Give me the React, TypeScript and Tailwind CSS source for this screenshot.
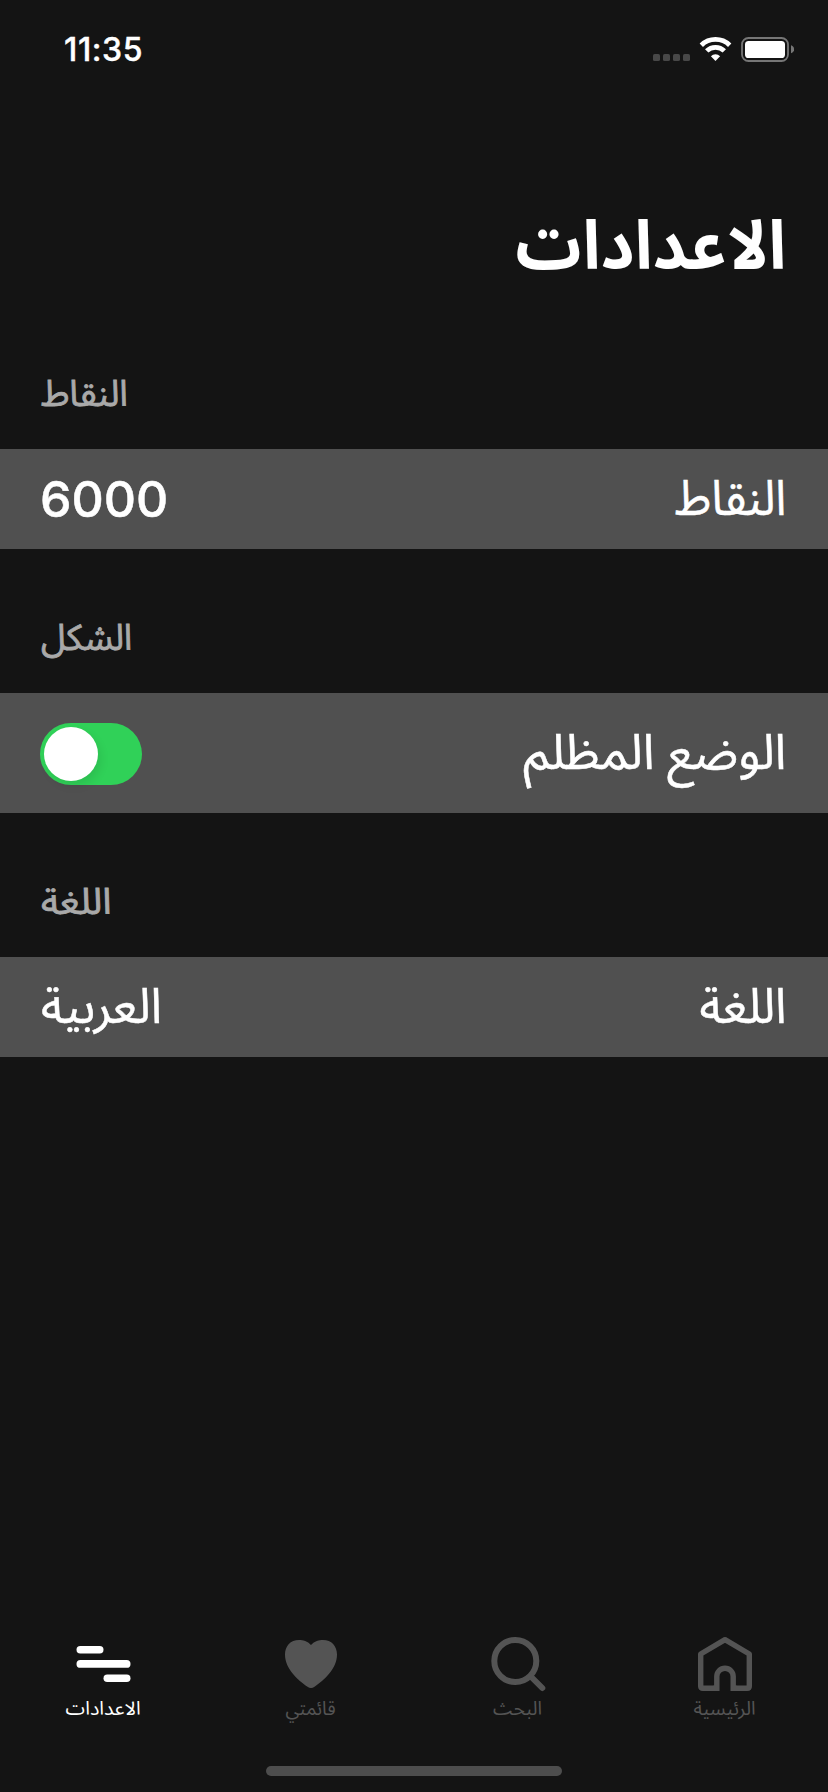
import type { ReactNode } from "react";

const ARABIC = "font-['Noto_Sans_Arabic','DejaVu_Sans',sans-serif] whitespace-nowrap inline-block";
const LATIN = "font-['Inter',sans-serif] whitespace-nowrap inline-block";
const ROW_TEXT = `${ARABIC} mt-px text-[49px] leading-[60px] [-webkit-text-stroke:0.5px]`;

function StatusBar() {
  return (
    <header dir="ltr" className="flex h-[98px] items-start justify-between pr-[34px] pl-[64px]">
      <span className={`${LATIN} mt-[29px] text-[32px] leading-[42px] font-medium tracking-[0.6px] [-webkit-text-stroke:0.4px]`}>11:35</span>
      <svg className="mt-[36px]" width="141" height="26" viewBox="0 0 141 26">
        <g fill="#484848">
          <rect x="0" y="18" width="7" height="7" rx="1.6" />
          <rect x="10" y="18" width="7" height="7" rx="1.6" />
          <rect x="20" y="18" width="7" height="7" rx="1.6" />
          <rect x="30" y="18" width="7" height="7" rx="1.6" />
        </g>
        <g fill="none" stroke="#fff" strokeWidth="4.8">
          <path d="M48.3 9.2a20.4 20.4 0 0 1 28.4 0" />
          <path d="M53.7 14.9a12.6 12.6 0 0 1 17.6 0" />
        </g>
        <path d="M62.5 25l-4.6-4.8a6.6 6.6 0 0 1 9.2 0z" fill="#fff" />
        <rect x="89" y="2" width="46" height="23" rx="6.5" fill="none" stroke="#767676" strokeWidth="1.8" />
        <rect x="92" y="5" width="40" height="17" rx="3.6" fill="#fff" />
        <path d="M138 9.2c4.2 1.4 4.2 6.6 0 8z" fill="#767676" />
      </svg>
    </header>
  );
}

function Section({ title, titleClass, rowClass, children }: { title: string; titleClass: string; rowClass: string; children: ReactNode }) {
  return (
    <section>
      <div className="flex h-[144px] justify-end pt-[68px] pl-[41px]">
        <h2 className={`${ARABIC} origin-left text-[36px] leading-[44px] text-[#a9a9a9] [-webkit-text-stroke:0.8px] ${titleClass}`}>{title}</h2>
      </div>
      <div className={`flex items-center justify-between bg-[#505050] pr-[42px] pl-[40px] ${rowClass}`}>{children}</div>
    </section>
  );
}

function Tab({ label, labelClass, color, children }: { label: string; labelClass: string; color: string; children: ReactNode }) {
  return (
    <button className={`flex w-1/4 flex-col items-center ${color}`}>
      {children}
      <span className={`${ARABIC} mt-px text-[19px] leading-[28px] ${labelClass}`}>{label}</span>
    </button>
  );
}

export default function App() {
  return (
    <div dir="rtl" className="flex h-[1792px] w-[828px] flex-col overflow-hidden bg-[#141414] text-white">
      <StatusBar />
      <div className="flex h-[207px] pt-[108px] pr-[42px]">
        <h1 className={`${ARABIC} origin-right scale-x-[0.967] text-[68px] leading-[84px] font-bold`}>الاعدادات</h1>
      </div>
      <Section title="النقاط" titleClass="" rowClass="h-[100px]">
        <span className={`${ROW_TEXT} origin-right scale-x-[0.942]`}>النقاط</span>
        <span className={`${LATIN} text-[50px] leading-[60px] font-medium [-webkit-text-stroke:0.5px]`}>6000</span>
      </Section>
      <Section title="الشكل" titleClass="scale-x-[0.98]" rowClass="h-[120px]">
        <span className={`${ROW_TEXT} origin-right scale-x-[1.01]`}>الوضع المظلم</span>
        <button role="switch" aria-checked="true" className="mt-[2px] flex h-[62px] w-[102px] items-center justify-end rounded-full bg-[#30d158] p-1">
          <span className="size-[54px] rounded-full bg-white shadow-[3px_5px_10px_rgba(0,0,0,0.09)]" />
        </button>
      </Section>
      <Section title="اللغة" titleClass="scale-x-[1.085]" rowClass="h-[100px]">
        <span className={`${ROW_TEXT} origin-right scale-x-[0.983]`}>اللغة</span>
        <span className={`${ROW_TEXT} ml-px origin-left scale-x-[0.982]`}>العربية</span>
      </Section>
      <nav className="mt-auto flex h-[131px]">
        <Tab label="الرئيسية" labelClass="scale-x-[1.02]" color="text-[#545454]">
          <svg width="60" height="60" viewBox="0 0 60 60" fill="none" stroke="currentColor" strokeWidth="5.4">
            <path d="M19 54.300H7.800q-2.100 0-2.100-2.100V20L30 5.700 54.300 20v32.200q0 2.100-2.100 2.100H41" strokeLinejoin="round" />
            <path d="M41.500 54.300H38.200V42.500a8.200 8.200 0 0 0-16.400 0V54.300H18.500" />
          </svg>
        </Tab>
        <Tab label="البحث" labelClass="" color="text-[#545454]">
          <svg width="60" height="60" viewBox="0 0 60 60" fill="none" stroke="currentColor" strokeWidth="6" strokeLinecap="round">
            <circle cx="27.300" cy="27" r="21" />
            <path d="M42.800 42.500L54.300 54" />
          </svg>
        </Tab>
        <Tab label="قائمتي" labelClass="scale-x-[0.98]" color="text-[#545454]">
          <svg width="60" height="60" viewBox="0 0 60 60" fill="currentColor">
            <path d="M30 11C26.500 7.200 22 6 18 6 9.500 6 4 12 4 20.500 4 35 17 46 26.500 52.700Q30 55.300 33.500 52.700C43 46 56 35 56 20.500 56 12 50.500 6 42 6 38 6 33.500 7.200 30 11z" />
          </svg>
        </Tab>
        <Tab label="الاعدادات" labelClass="scale-x-[1.04]" color="text-white">
          <svg width="60" height="60" viewBox="0 0 60 60" fill="currentColor">
            <rect x="2.500" y="12" width="27" height="7.500" rx="3.750" />
            <rect x="2.500" y="26" width="54" height="7.800" rx="3.900" />
            <rect x="29.500" y="40.500" width="27" height="7.500" rx="3.750" />
          </svg>
        </Tab>
      </nav>
      <div className="flex h-[27px] shrink-0 justify-center pt-px">
        <div className="h-[10px] w-[296px] rounded-full bg-[#4d4d4d]" />
      </div>
    </div>
  );
}
